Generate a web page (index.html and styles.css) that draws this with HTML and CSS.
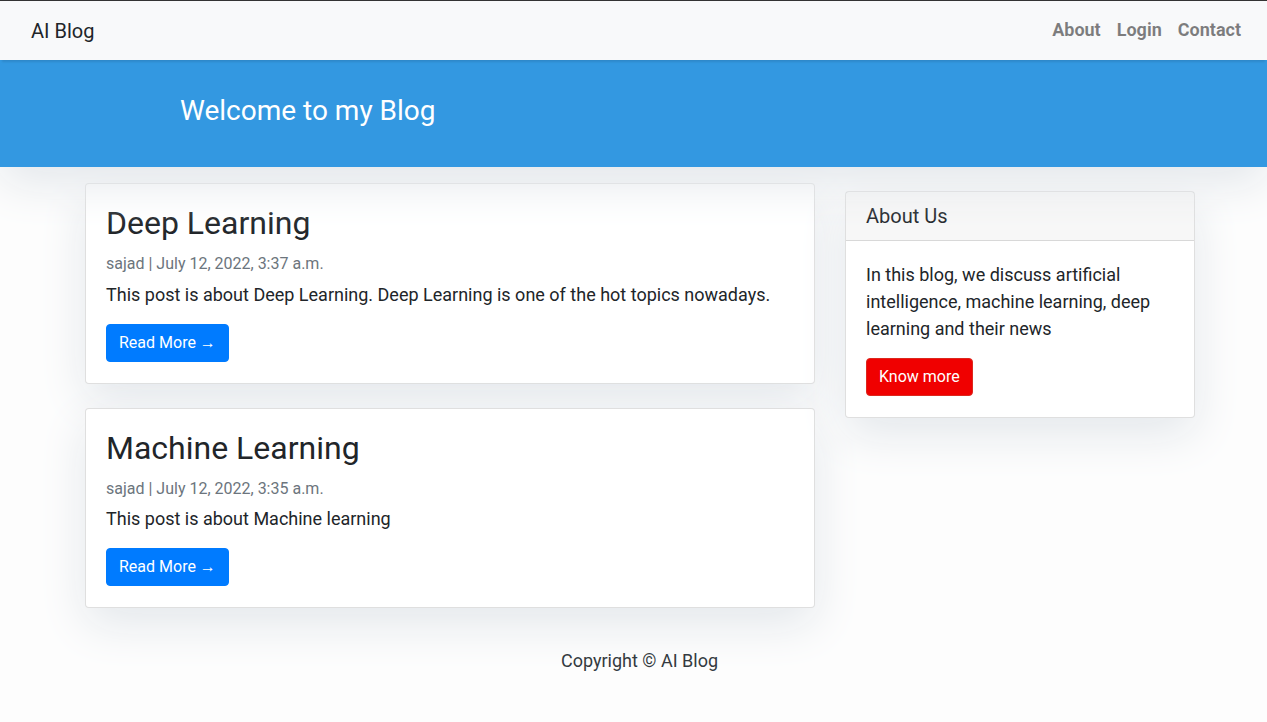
FILE: index.html
```html
<!DOCTYPE html>
<html lang="en">
<head>
<meta charset="utf-8">
<title>AI Blog</title>
<link rel="stylesheet" href="styles.css">
</head>
<body>
<nav class="navbar">
  <a class="brand" href="#">AI Blog</a>
  <ul class="nav-links">
    <li><a href="#">About</a></li>
    <li><a href="#">Login</a></li>
    <li><a href="#">Contact</a></li>
  </ul>
</nav>
<header class="masthead">
  <h3 class="site-heading">Welcome to my Blog</h3>
</header>
<main class="container">
  <div class="posts">
    <article class="card">
      <div class="card-body">
        <h2 class="card-title">Deep Learning</h2>
        <p class="meta">sajad | July 12, 2022, 3:37 a.m.</p>
        <p class="card-text">This post is about Deep Learning. Deep Learning is one of the hot topics nowadays.</p>
        <a href="#" class="btn btn-primary">Read More &rarr;</a>
      </div>
    </article>
    <article class="card">
      <div class="card-body">
        <h2 class="card-title">Machine Learning</h2>
        <p class="meta">sajad | July 12, 2022, 3:35 a.m.</p>
        <p class="card-text">This post is about Machine learning</p>
        <a href="#" class="btn btn-primary">Read More &rarr;</a>
      </div>
    </article>
  </div>
  <aside class="sidebar">
    <div class="card">
      <h5 class="card-header">About Us</h5>
      <div class="card-body">
        <p class="card-text">In this blog, we discuss artificial intelligence, machine learning, deep learning and their news</p>
        <a href="#" class="btn btn-danger">Know more</a>
      </div>
    </div>
  </aside>
</main>
<footer class="footer">
  <p>Copyright &copy; AI Blog</p>
</footer>
</body>
</html>
```
FILE: styles.css
```css
* { box-sizing: border-box; }
html, body { margin: 0; padding: 0; }
body {
  font-family: Roboto, "Liberation Sans", sans-serif;
  font-size: 18px;
  line-height: 1.5;
  color: #212529;
  background: #fdfdfd;
  border-top: 1px solid #333;
}
a { text-decoration: none; }

.navbar {
  height: 59px;
  background: #f8f9fa;
  display: flex;
  align-items: center;
  justify-content: space-between;
  padding: 0 18px 0 31px;
  position: relative;
  z-index: 2;
  box-shadow: 0 4px 2px -2px rgba(0,0,0,0.1);
}
.brand {
  color: #212529;
  font-size: 20px;
  line-height: 30px;
}
.nav-links {
  list-style: none;
  margin: 0;
  padding: 0;
  display: flex;
}
.nav-links a {
  display: block;
  padding: 7px 8px 9px;
  font-weight: 700;
  color: rgba(0,0,0,0.5);
  font-size: 18px;
  line-height: 27px;
}

.masthead {
  background: #3398e1;
  height: 107px;
  display: flex;
  align-items: center;
  padding-left: 180px;
  box-shadow: 0 16px 48px #e3e7eb;
  position: relative;
  z-index: 1;
}
.site-heading {
  margin: 0;
  color: #fff;
  font-weight: 400;
  font-size: 28px;
  line-height: 1.2;
  padding-bottom: 6px;
}

.container {
  display: grid;
  grid-template-columns: 730px 350px;
  column-gap: 30px;
  align-items: start;
  padding-left: 85px;
}
.posts { padding-top: 16px; }
.sidebar { padding-top: 24px; }

.card {
  background: #fff;
  border: 1px solid rgba(0,0,0,0.125);
  border-radius: 4px;
  box-shadow: 0 16px 48px #e3e7eb;
  margin-bottom: 24px;
}
.card-body { padding: 20px 20px 21px; }
.card-title {
  margin: 0 0 12px;
  font-size: 32px;
  font-weight: 400;
  line-height: 1.2;
}
.meta {
  margin: 0 0 7px;
  color: #6c757d;
  font-size: 16px;
  line-height: 1.2;
}
.card-text { margin: 0 0 16px; }
.card-header {
  margin: 0;
  padding: 12px 20px;
  font-size: 20px;
  font-weight: 400;
  line-height: 1.2;
  background: rgba(0,0,0,0.03);
  border-bottom: 1px solid rgba(0,0,0,0.125);
}

.btn {
  display: inline-block;
  padding: 6px 12px;
  font-size: 16px;
  line-height: 24px;
  border: 1px solid transparent;
  border-radius: 4px;
  color: #fff;
}
.btn-primary { background: #007bff; border-color: #007bff; }
.btn-danger { background: #f00000; border-color: #dc281e; }

.footer {
  text-align: center;
  padding: 0 0 16px;
  color: #343a40;
}
.footer p { margin: 15px 0 0; padding-left: 12px; }
```
